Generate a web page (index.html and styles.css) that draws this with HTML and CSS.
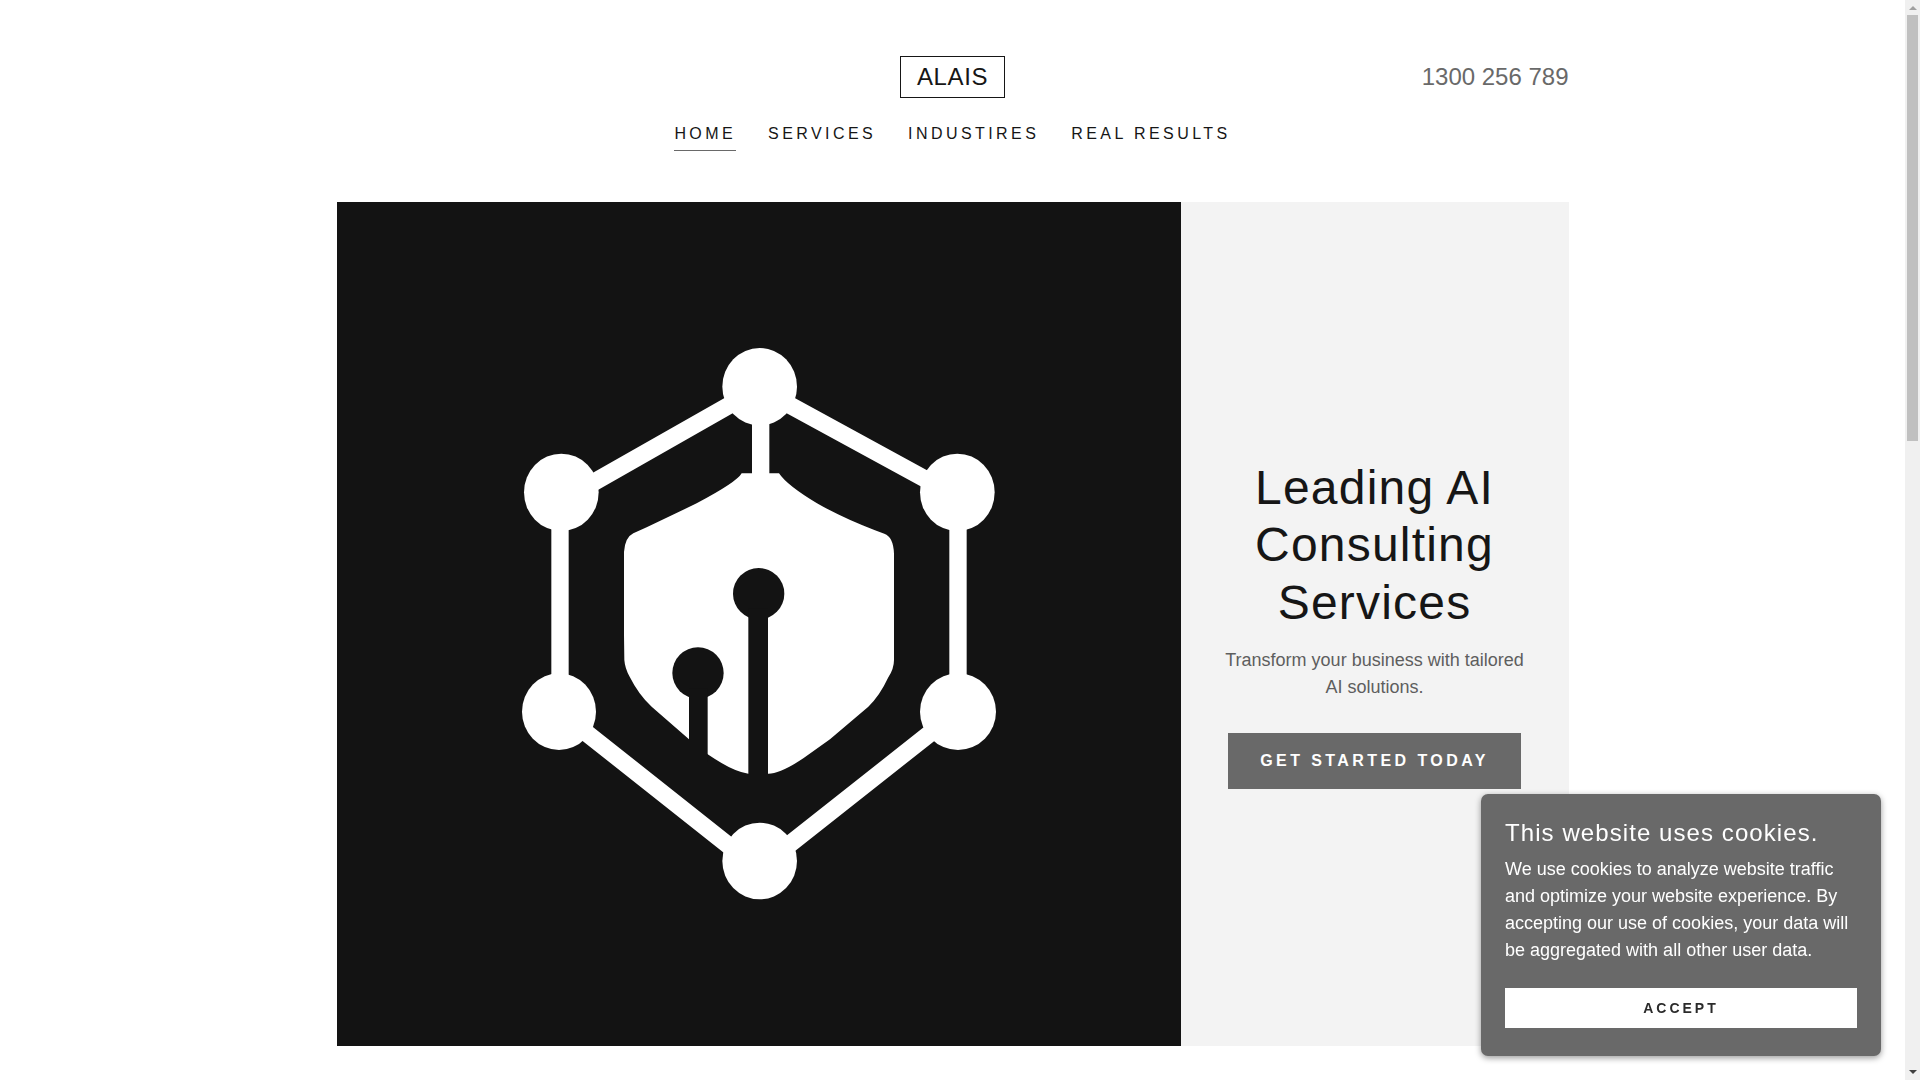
FILE: index.html
```
<!DOCTYPE html>
<html lang="en">
<head>
    <meta charset="UTF-8">
    <meta name="viewport" content="width=device-width, initial-scale=1.0">
    <title>ALAIS</title>
    <link rel="stylesheet" href="styles.css">
</head>
<body>

    <div class="page">
        <header class="header">
            <div class="header-top">
                <a class="logo" href="#">ALAIS</a>
                <a class="phone" href="tel:1300256789">1300 256 789</a>
            </div>
            <nav class="nav">
                <a class="active" href="#">HOME</a>
                <a href="#">SERVICES</a>
                <a href="#">INDUSTIRES</a>
                <a href="#">REAL RESULTS</a>
            </nav>
        </header>

        <main class="hero">
            <div class="hero-image">
                <svg viewBox="0 0 2532 2532" aria-hidden="true">
                    <!-- Network lines -->
                    <g stroke="#fff" stroke-width="52" stroke-linecap="square">
                        <path d="M770 841L1190 602M1369 615L1759 828M760 1602L1169 1926M1369 1918L1769 1602"/>
                        <path d="M669 860V1530M1863 860V1530M1271 560V830"/>
                    </g>
                    <!-- Nodes -->
                    <g fill="#fff">
                        <ellipse cx="1268" cy="554" rx="112" ry="116"/>
                        <ellipse cx="673" cy="871" rx="112" ry="116"/>
                        <ellipse cx="1861" cy="871" rx="112" ry="116"/>
                        <ellipse cx="666" cy="1529" rx="111" ry="115"/>
                        <ellipse cx="1863" cy="1529" rx="114" ry="115"/>
                        <ellipse cx="1268" cy="1977" rx="112" ry="115"/>
                        <!-- Shield -->
                        <path d="M1214 814H1326Q1350 850 1440 904C1500 938 1555 961 1614 985L1642 995Q1669 1004 1671 1055V1374Q1671 1400 1654 1426Q1628 1482 1594 1514L1479 1612L1399 1669Q1330 1715 1294 1715H1234Q1190 1710 1112 1657L1056 1612L944 1514Q905 1478 878 1424Q864 1400 862 1374L861 1300V1050Q864 1006 889 994L929 976L1079 904Q1200 840 1214 814Z"/>
                    </g>
                    <!-- Circuit pins -->
                    <g fill="#131313">
                        <circle cx="1265" cy="1175" r="77"/>
                        <path d="M1234 1220H1293V1725H1234Z"/>
                        <circle cx="1083" cy="1413" r="77"/>
                        <path d="M1056 1460H1112V1680H1056Z"/>
                    </g>
                </svg>
            </div>
            <div class="hero-text">
                <h1>Leading AI Consulting Services</h1>
                <p>Transform your business with tailored AI solutions.</p>
                <a class="cta" href="#">GET STARTED TODAY</a>
            </div>
        </main>
    </div>

    <!-- Cookie banner -->
    <div class="cookies">
        <h2>This website uses cookies.</h2>
        <p>We use cookies to analyze website traffic and optimize your website experience. By accepting our use of cookies, your data will be aggregated with all other user data.</p>
        <button type="button">ACCEPT</button>
    </div>

    <div class="scrollbar" aria-hidden="true">
        <span class="arrow-up"></span>
        <span class="thumb"></span>
        <span class="arrow-down"></span>
    </div>

</body>
</html>
```
FILE: styles.css
```
/* General */
* {
    box-sizing: border-box;
}

body {
    margin: 0;
    background-color: #fff;
    color: #161616;
    font-family: "Liberation Sans", Arial, sans-serif;
    font-size: 18px;
    line-height: 27px;
    overflow: hidden;
}

a {
    color: inherit;
    text-decoration: none;
}

h1, h2, p {
    margin: 0;
    font-weight: normal;
}

.page {
    margin-right: 15px;
}

/* Header */
.header {
    max-width: 1280px;
    margin: 0 auto;
    padding: 56px 24px 51px;
}

.header-top {
    display: grid;
    grid-template-columns: 1fr auto 1fr;
    align-items: center;
    font-size: 24px;
    line-height: 28px;
}

.logo {
    grid-column: 2;
    padding: 6px 16px;
    border: 1px solid #161616;
    letter-spacing: 0.025em;
}

.phone {
    justify-self: end;
    color: #696969;
}

.nav {
    display: flex;
    justify-content: center;
    gap: 32px;
    margin-top: 24px;
    font-size: 16px;
    line-height: 24px;
    letter-spacing: 0.214em;
}

.nav a {
    padding-bottom: 4px;
    border-bottom: 1px solid transparent;
}

.nav .active {
    border-color: #696969;
}

/* Hero */
.hero {
    display: flex;
    max-width: 1232px;
    margin: 0 auto;
    background-color: #f3f3f3;
}

.hero-image {
    flex: 1;
    background-color: #131313;
}

.hero-image svg {
    display: block;
    width: 100%;
}

.hero-text {
    display: flex;
    flex-direction: column;
    align-items: center;
    justify-content: center;
    width: 388px;
    padding: 40px;
    text-align: center;
}

.hero-text h1 {
    font-size: 48px;
    line-height: 1.2;
    letter-spacing: 0.025em;
}

.hero-text p {
    margin: 16px 0 32px;
    color: #5e5e5e;
}

.cta {
    padding: 16px 32px;
    background-color: #696969;
    color: #fff;
    font-size: 16px;
    font-weight: bold;
    line-height: 24px;
    letter-spacing: 0.214em;
    white-space: nowrap;
}

/* Cookie banner */
.cookies {
    position: fixed;
    right: 39px;
    bottom: 24px;
    width: 400px;
    padding: 24px 24px 28px;
    border-radius: 7px;
    background-color: #696969;
    color: #fff;
    box-shadow: 0 2px 6px rgba(0, 0, 0, 0.4);
}

.cookies h2 {
    margin-bottom: 8px;
    font-size: 24px;
    line-height: 30px;
    letter-spacing: 0.045em;
}

.cookies button {
    display: block;
    width: 100%;
    height: 40px;
    margin-top: 24px;
    border: none;
    background-color: #fff;
    color: #2b2b2b;
    font-family: inherit;
    font-size: 14px;
    font-weight: bold;
    letter-spacing: 0.214em;
    cursor: pointer;
}

/* Scrollbar */
.scrollbar {
    position: fixed;
    top: 0;
    right: 0;
    bottom: 0;
    display: flex;
    flex-direction: column;
    align-items: center;
    width: 15px;
    padding: 6px 2px;
    background-color: #f0f0f0;
}

.thumb {
    width: 11px;
    height: 426px;
    margin: 5px 0 auto;
    background-color: #c0c0c0;
}

.arrow-up,
.arrow-down {
    border: 4px solid transparent;
}

.arrow-up {
    border-top: none;
    border-bottom-color: #a0a0a0;
}

.arrow-down {
    border-bottom: none;
    border-top-color: #404040;
}
```
